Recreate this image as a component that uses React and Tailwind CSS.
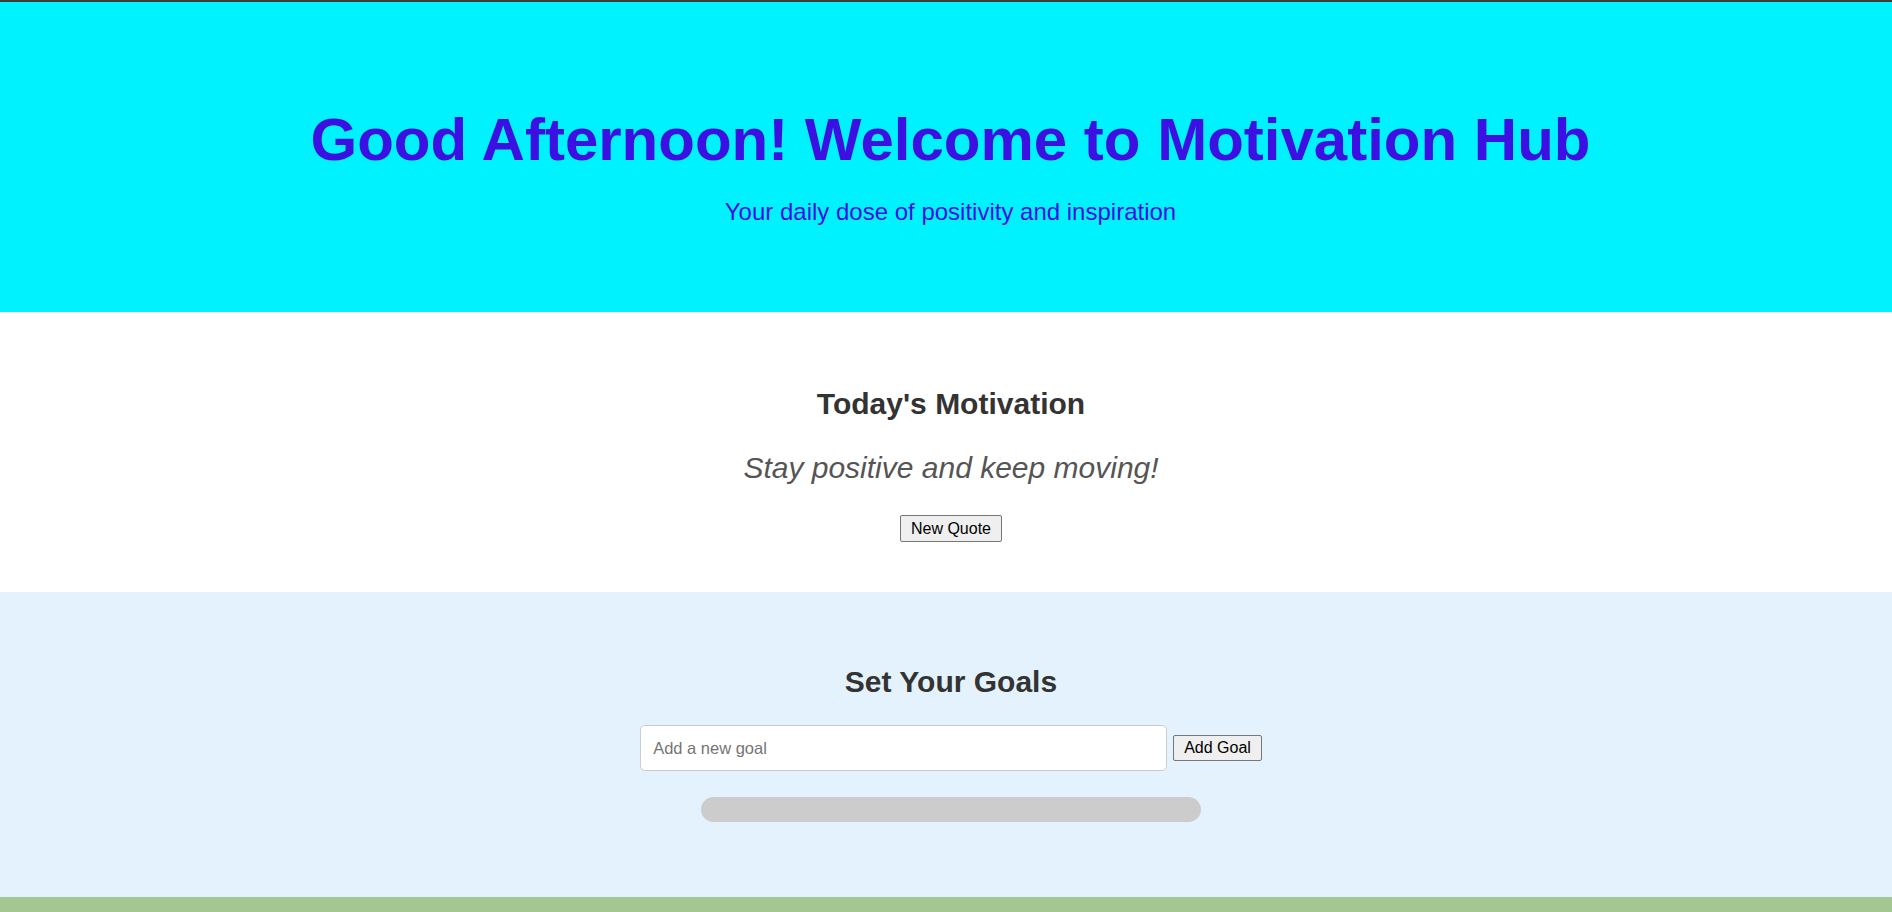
import React from "react";

export default function App() {
  return (
    <div className="min-h-screen w-full bg-white font-['Liberation_Sans',Arial,sans-serif] border-t-2 border-[#3c3c3c]">
      <header className="bg-[#00f2fe] pt-[104px] pb-[86px] pl-[9px] flex flex-col items-center text-center">
        <h1 className="text-[60px] leading-[68px] font-bold text-[#3c10e0]">
          Good Afternoon! Welcome to Motivation Hub
        </h1>
        <p className="mt-[24px] text-[24px] leading-[28px] text-[#3c10e0]">
          Your daily dose of positivity and inspiration
        </p>
      </header>

      <section className="bg-white pt-[75px] pb-[50px] pl-[10px] flex flex-col items-center text-center">
        <h2 className="text-[30px] leading-[34px] font-bold text-[#333333]">Today's Motivation</h2>
        <p className="mt-[30px] text-[30px] leading-[34px] italic text-[#555555]">
          Stay positive and keep moving!
        </p>
        <button className="mt-[30px] h-[27px] px-[10px] text-[16px] leading-[18px] text-black bg-[#efefef] border border-[#767676] rounded-[2px]">
          New Quote
        </button>
      </section>

      <section className="bg-[#e3f2fd] pt-[73px] pb-[75px] pl-[10px] flex flex-col items-center text-center">
        <h2 className="text-[30px] leading-[34px] font-bold text-[#333333]">Set Your Goals</h2>
        <div className="mt-[26px] flex items-center gap-[6px]">
          <input
            type="text"
            placeholder="Add a new goal"
            className="w-[527px] h-[46px] px-[12px] text-[16.5px] bg-white border border-[#cccccc] rounded-[5px] placeholder:text-[#757575] outline-none"
          />
          <button className="h-[26px] px-[10px] text-[16px] leading-[18px] text-black bg-[#efefef] border border-[#767676] rounded-[2px]">
            Add Goal
          </button>
        </div>
        <div className="mt-[26px] w-[500px] h-[25px] rounded-full bg-[#cccccc]" />
      </section>

      <section className="bg-[#a4c791] h-[15px]" />
    </div>
  );
}
